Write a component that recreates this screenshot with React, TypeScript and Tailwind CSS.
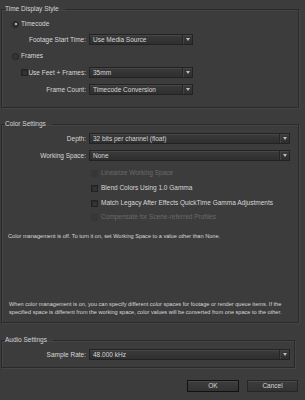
import type { ReactNode } from "react";

const Dropdown = ({ value, className }: { value: string; className: string }) => (
  <div
    className={
      "flex h-[11px] items-stretch border border-[#222] bg-gradient-to-b from-[#3a3a3a] to-[#2f2f2f] shadow-[inset_0_1px_0_#474747] " +
      className
    }
  >
    <span className="flex-1 truncate pl-[3px] leading-[9px] text-[#d8d8d8]">{value}</span>
    <span className="flex w-[10px] items-center justify-center border-l border-[#252525] shadow-[inset_1px_0_0_#444]">
      <span className="h-0 w-0 border-x-[2px] border-t-[3px] border-x-transparent border-t-[#bdbdbd]" />
    </span>
  </div>
);

const Group = ({
  title,
  className,
  children,
}: {
  title: string;
  className: string;
  children: ReactNode;
}) => (
  <fieldset className={"ml-[1px] border border-[#2a2a2a] shadow-[inset_1px_1px_0_#454545,1px_1px_0_#454545] " + className}>
    <legend className="ml-[3px] h-[8px] pr-[6px] leading-[8px] text-[#d2d2d2]">{title}</legend>
    {children}
  </fieldset>
);

const Radio = ({ checked }: { checked?: boolean }) => (
  <span className="flex h-[7px] w-[7px] items-center justify-center rounded-full border border-[#242424] bg-[#343434]">
    {checked && <span className="h-[2px] w-[2px] rounded-full bg-[#e0e0e0]" />}
  </span>
);

const Check = ({ disabled }: { disabled?: boolean }) => (
  <span
    className={
      "h-[7px] w-[7px] border bg-[#343434] " +
      (disabled ? "border-[#333] opacity-60" : "border-[#222] shadow-[inset_1px_1px_0_#2a2a2a]")
    }
  />
);

const Field = ({ label, children }: { label: ReactNode; children: ReactNode }) => (
  <div className="flex items-center">
    <div className="w-[84px] text-right leading-[11px]">{label}</div>
    <div className="ml-[3px] flex-1">{children}</div>
  </div>
);

const CheckRow = ({ label, disabled, className }: { label: string; disabled?: boolean; className: string }) => (
  <div className={"flex h-[8px] items-center pl-[89px] " + className}>
    <Check disabled={disabled} />
    <span className={"ml-[3px] leading-[8px] " + (disabled ? "text-[#6a6a6a]" : "text-[#d8d8d8]")}>{label}</span>
  </div>
);

export default function App() {
  return (
    <div className="flex h-[400px] w-[305px] flex-col bg-[#3c3c3c] font-['Liberation_Sans',Arial,sans-serif] text-[6.5px] text-[#d8d8d8]">
      <Group title="Time Display Style" className="mr-[6px] mt-[5px] pb-[12px]">
        <div className="mt-[7px] flex h-[8px] items-center pl-[10px]">
          <Radio checked />
          <span className="ml-[2px] leading-[8px]">Timecode</span>
        </div>
        <div className="mt-[6px]">
          <Field label="Footage Start Time:">
            <Dropdown value="Use Media Source" className="w-[104px]" />
          </Field>
        </div>
        <div className="mt-[7px] flex h-[8px] items-center pl-[10px]">
          <Radio />
          <span className="ml-[2px] leading-[8px]">Frames</span>
        </div>
        <div className="mt-[7px]">
          <Field
            label={
              <div className="flex items-center pl-[19px]">
                <Check />
                <span className="flex-1 text-right">Use Feet + Frames:</span>
              </div>
            }
          >
            <Dropdown value="35mm" className="w-[104px]" />
          </Field>
        </div>
        <div className="mt-[6px]">
          <Field label="Frame Count:">
            <Dropdown value="Timecode Conversion" className="w-[104px]" />
          </Field>
        </div>
      </Group>

      <Group title="Color Settings" className="mr-[6px] mt-[12px] pb-[6px]">
        <div className="mt-[5px]">
          <Field label="Depth:">
            <Dropdown value="32 bits per channel (float)" className="w-[201px]" />
          </Field>
        </div>
        <div className="mt-[6px]">
          <Field label="Working Space:">
            <Dropdown value="None" className="w-[201px]" />
          </Field>
        </div>
        <CheckRow label="Linearize Working Space" disabled className="mt-[8px]" />
        <CheckRow label="Blend Colors Using 1.0 Gamma" className="mt-[7px]" />
        <CheckRow label="Match Legacy After Effects QuickTime Gamma Adjustments" className="mt-[7px]" />
        <CheckRow label="Compensate for Scene-referred Profiles" disabled className="mt-[6px]" />
        <p className="mt-[11px] pl-[6px] text-[5.6px] leading-[8px]">
          Color management is off. To turn it on, set Working Space to a value other than None.
        </p>
        <p className="mt-[60px] pl-[7px] pr-[6px] text-[5.6px] leading-[8px]">
          When color management is on, you can specify different color spaces for footage or render queue items. If the
          specified space is different from the working space, color values will be converted from one space to the other.
        </p>
      </Group>

      <Group title="Audio Settings" className="mr-[10px] mt-[13px] pb-[7px]">
        <div className="mt-[5px]">
          <Field label="Sample Rate:">
            <Dropdown value="48.000 kHz" className="w-[201px]" />
          </Field>
        </div>
      </Group>

      <div className="mr-[7px] mt-[12px] flex justify-end gap-[8px]">
        <button className="h-[12px] w-[52px] border border-[#111] bg-gradient-to-b from-[#3d3d3d] to-[#333] leading-[10px] text-[#d8d8d8] shadow-[inset_0_1px_0_#4a4a4a]">
          OK
        </button>
        <button className="h-[12px] w-[51px] border border-[#262626] bg-gradient-to-b from-[#3d3d3d] to-[#333] leading-[10px] text-[#d8d8d8] shadow-[inset_0_1px_0_#4a4a4a]">
          Cancel
        </button>
      </div>
    </div>
  );
}
